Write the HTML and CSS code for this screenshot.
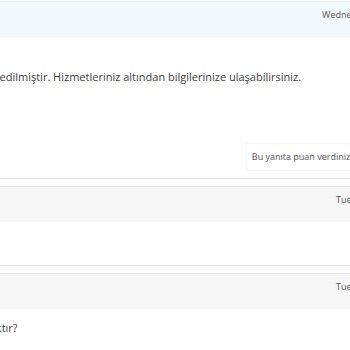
FILE: index.html
```html
<!DOCTYPE html>
<html lang="tr">
<head>
<meta charset="utf-8">
<title>Destek Talebi</title>
<link rel="stylesheet" href="styles.css">
</head>
<body>
<div class="thread">
  <div class="reply staff">
    <div class="reply-head">
      <div class="user"><span class="name">Destek Ekibi</span><span class="role">Operatör</span></div>
      <div class="date">Wednesday, 13th March 2019 (16:21)</div>
    </div>
    <div class="message">
      <div class="line">Merhaba,</div>
      <div class="line">Sayın müşterimiz, satın almış olduğunuz hizmetiniz aktif edilmiştir. Hizmetleriniz altından bilgilerinize ulaşabilirsiniz.</div>
      <div class="line">İyi çalışmalar.</div>
      <div class="line">Saygılarımızla</div>
    </div>
    <div class="rating">
      <div class="rating-box"><span class="rating-text">Bu yanıta puan verdiniz</span><span class="stars">★★★★★</span></div>
    </div>
  </div>

  <div class="reply client">
    <div class="reply-head">
      <div class="user"><span class="name">Müşteri</span><span class="role">Sahip</span></div>
      <div class="date">Tuesday, 12th March 2019 (11:07)</div>
    </div>
    <div class="message">
      <div class="line">Teşekkürler.</div>
    </div>
  </div>

  <div class="reply client">
    <div class="reply-head">
      <div class="user"><span class="name">Müşteri</span><span class="role">Sahip</span></div>
      <div class="date">Tuesday, 12th March 2019 (10:42)</div>
    </div>
    <div class="message">
      <div class="line">Satın aldığım son hizmetin kurulumu ne zaman yapılacaktır?</div>
    </div>
  </div>
</div>
</body>
</html>
```

FILE: styles.css
```css
html, body {
  margin: 0;
  padding: 0;
  background: #ffffff;
  overflow: hidden;
}

body {
  font-family: "Open Sans", "Liberation Sans", sans-serif;
  color: #444444;
}

.thread {
  margin-left: -302px;
  width: 790px;
  padding-top: 1px;
  display: flex;
  flex-direction: column;
  gap: 7px;
}

.reply {
  border: 1px solid #e6e6e6;
  background: #ffffff;
}

.reply.staff {
  border-color: #e3eaf1;
}

.reply-head {
  display: flex;
  justify-content: space-between;
  align-items: flex-start;
  height: 35px;
  background: #f6f6f6;
}

.staff .reply-head {
  background: #f3f8fc;
}

.user {
  padding: 9px 12px;
  font-size: 11px;
  line-height: 16px;
  display: flex;
  gap: 6px;
}

.user .name {
  font-weight: 600;
  color: #333;
}

.user .role {
  color: #888;
}

.date {
  padding: 5px 10px 0;
  font-size: 9px;
  line-height: 16px;
  color: #555555;
  white-space: nowrap;
}

.message {
  padding: 8px 12px 14px;
  font-size: 11px;
  line-height: 21px;
  color: #3f3f3f;
  white-space: nowrap;
}

.rating {
  display: flex;
  justify-content: flex-end;
  padding: 0 10px 7px;
}

.rating-box {
  display: flex;
  align-items: center;
  gap: 13px;
  padding: 6px 5px;
  border: 1px solid #f4f5f6;
  font-size: 9px;
  line-height: 14px;
  color: #555555;
  white-space: nowrap;
}

.stars {
  font-size: 14px;
  letter-spacing: 9px;
  color: #f0ad00;
  font-family: "DejaVu Sans", sans-serif;
}
```
